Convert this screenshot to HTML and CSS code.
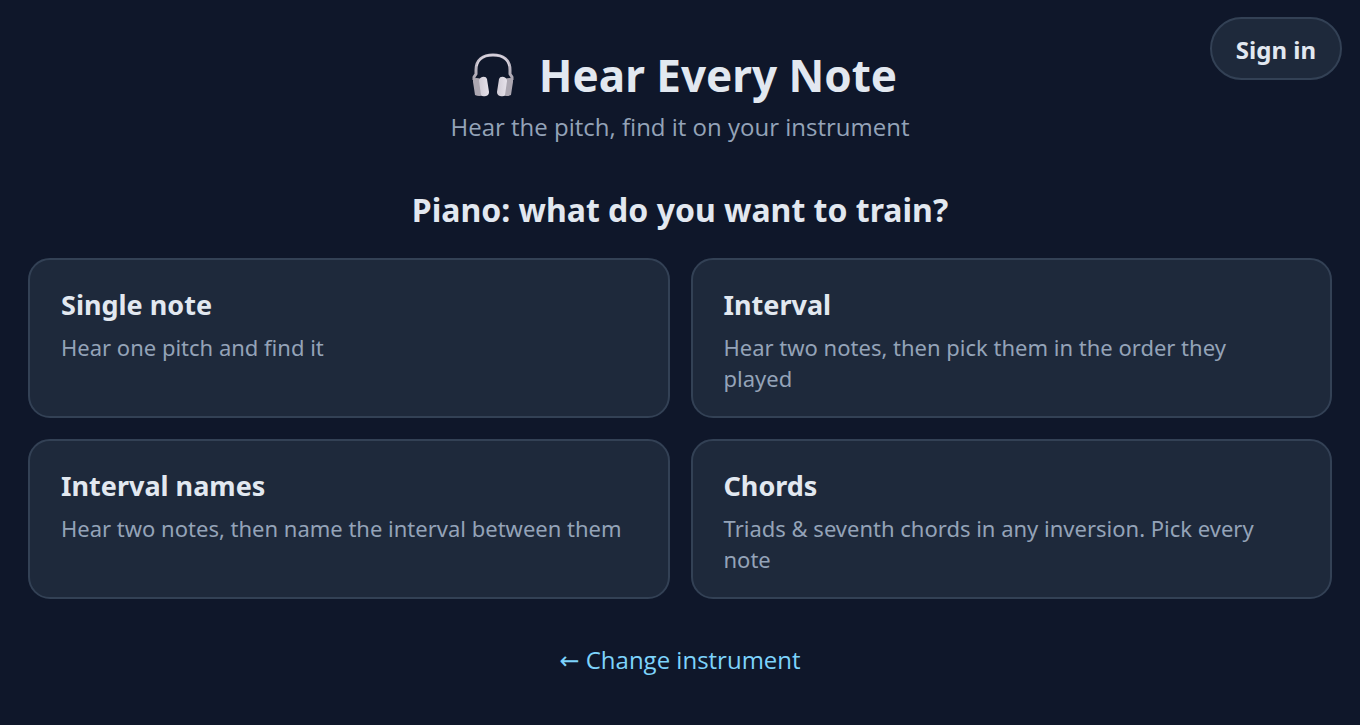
FILE: index.html
```html
<!DOCTYPE html>
<html lang="en">
<head>
<meta charset="utf-8">
<meta name="viewport" content="width=device-width, initial-scale=1">
<title>Hear Every Note</title>
<link rel="stylesheet" href="styles.css">
</head>
<body>
<button class="sign-in" type="button">Sign in</button>
<header class="header">
  <h1 class="title">
    <svg class="logo" viewBox="0 0 44 48" aria-hidden="true">
      <defs>
        <linearGradient id="band" x1="0" y1="0" x2="0" y2="1"><stop offset="0" stop-color="#cbc5d1"/><stop offset="1" stop-color="#aaa5b0"/></linearGradient>
        <linearGradient id="pad" x1="0" y1="0" x2="1" y2="0"><stop offset="0" stop-color="#d0cbd5"/><stop offset="1" stop-color="#e6e2ea"/></linearGradient>
      </defs>
      <path d="M3 29v-3l2-3v-4C5 9 12 4 22 4s17 5 17 15v4l2 3v3" fill="none" stroke="url(#band)" stroke-width="3" stroke-linejoin="round"/>
      <path d="M6 15C8 7 14 4 22 4s14 3 16 11" fill="none" stroke="#ddd8e2" stroke-width="1"/>
      <path d="M2 28q3-2 8 0l3 16q-5 2-9 0Q3 37 2 31z" fill="#aca7b1"/>
      <path d="M42 28q-3-2-8 0l-3 16q5 2 9 0 1-7 2-13z" fill="#aca7b1"/>
      <path d="M8 30q0-3 3-4 4-1 5 2l2 13q0 3-3 4-4 1-5-1z" fill="url(#pad)"/>
      <path d="M36 30q0-3-3-4-4-1-5 2l-2 13q0 3 3 4 4 1 5-1z" fill="url(#pad)"/>
    </svg>
    <span>Hear Every Note</span>
  </h1>
  <p class="tagline">Hear the pitch, find it on your instrument</p>
</header>
<main class="main">
  <h2 class="question">Piano: what do you want to train?</h2>
  <div class="modes">
    <button class="mode" type="button"><span class="mode-name">Single note</span><span class="mode-text">Hear one pitch and find it</span></button>
    <button class="mode" type="button"><span class="mode-name">Interval</span><span class="mode-text">Hear two notes, then pick them in the order they played</span></button>
    <button class="mode" type="button"><span class="mode-name">Interval names</span><span class="mode-text">Hear two notes, then name the interval between them</span></button>
    <button class="mode" type="button"><span class="mode-name">Chords</span><span class="mode-text">Triads &amp; seventh chords in any inversion. Pick every note</span></button>
  </div>
  <button class="back" type="button"><span class="arrow">←</span> Change instrument</button>
</main>
</body>
</html>
```
FILE: styles.css
```css
* { box-sizing: border-box; }
body {
  margin: 0;
  padding: 44px 28px 0;
  background: #0f172a;
  color: #e2e8f0;
  font-family: "Noto Sans", "Open Sans", sans-serif;
}
button { font-family: inherit; cursor: pointer; }
.sign-in {
  position: absolute;
  top: 17px;
  right: 18px;
  padding: 15px 24px 13px;
  border: 2px solid #334155;
  border-radius: 32px;
  background: #1e293b;
  color: #e2e8f0;
  font-size: 24px;
  font-weight: 700;
  line-height: 31px;
}
.header { text-align: center; }
.title {
  display: flex;
  align-items: center;
  justify-content: center;
  gap: 24px;
  margin: 0;
  padding-left: 8px;
  font-size: 44px;
  font-weight: 700;
  line-height: 62px;
}
.logo { width: 44px; height: 48px; }
.tagline {
  margin: 4px 0 0;
  color: #94a3b8;
  font-family: "Open Sans", "Noto Sans", sans-serif;
  font-size: 24px;
  line-height: 34px;
}
.main { display: flex; flex-direction: column; align-items: center; }
.question {
  margin: 42px 0 24px;
  font-size: 32px;
  font-weight: 700;
  line-height: 48px;
}
.modes {
  display: grid;
  grid-template-columns: 1fr 1fr;
  gap: 21px;
  width: 100%;
}
.mode {
  display: flex;
  flex-direction: column;
  gap: 6px;
  min-height: 160px;
  padding: 24px 31px 22px;
  border: 2px solid #334155;
  border-radius: 22px;
  background: #1e293b;
  color: #e2e8f0;
  text-align: left;
}
.mode-name { font-size: 27px; font-weight: 700; line-height: 42px; }
.mode-text { color: #94a3b8; font-size: 22px; line-height: 31px; }
.back {
  margin-top: 40px;
  padding: 4px;
  border: 0;
  background: none;
  color: #7dd3fc;
  font-family: "Open Sans", "Noto Sans", sans-serif;
  font-size: 24px;
  line-height: 34px;
}
.arrow { font-family: "DejaVu Sans", sans-serif; }
```
